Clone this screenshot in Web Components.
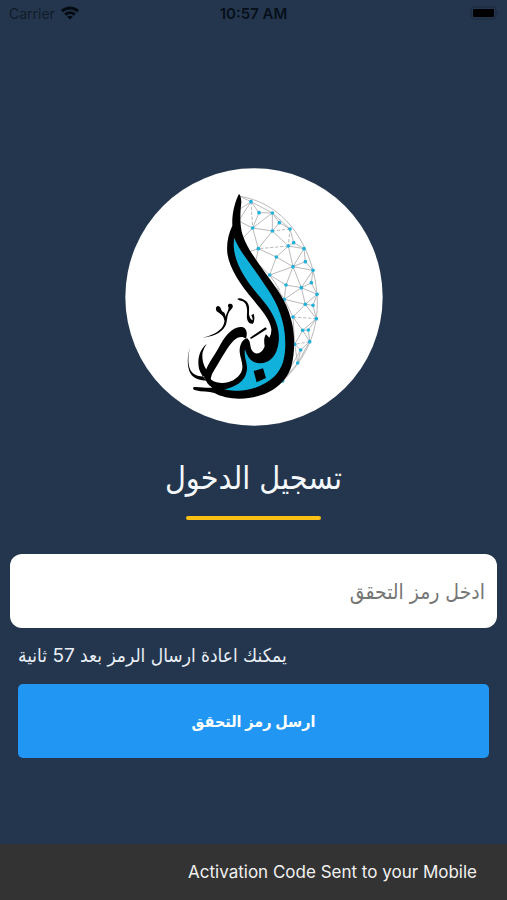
<!DOCTYPE html>
<html lang="ar">
<head>
  <meta charset="UTF-8">
  <meta name="viewport" content="width=device-width, initial-scale=1.0">
  <title>تسجيل الدخول</title>
  <style>
    body {
      margin: 0;
      background: #24364d;
      font-family: Inter, "DejaVu Sans Condensed", "DejaVu Sans", sans-serif;
    }
  </style>
</head>
<body>
  <login-page></login-page>

  <script>
    class StatusBar extends HTMLElement {
      constructor() {
        super();
        this.shadowDOM = this.attachShadow({ mode: "open" });
      }

      connectedCallback() {
        this.shadowDOM.innerHTML = `
          <style>
          :host {
            display: grid;
            grid-template-columns: 1fr auto 1fr;
            align-items: center;
            height: 26px;
            padding: 0 9px;
            font-size: 14px;
            color: #07101a;
          }
          .carrier {
            display: flex;
            align-items: center;
            gap: 6px;
            color: #101c29;
          }
          .time {
            font-size: 15px;
            font-weight: 600;
          }
          .battery {
            justify-self: end;
          }
          svg {
            display: block;
          }
          </style>
          <span class="carrier"><span><slot name="carrier"></slot></span>
            <svg width="18" height="14" viewBox="0 0 18 14" fill="none" stroke="#050b12" stroke-width="3">
              <path d="M1 5.2C5.5 .8 12.5 .8 17 5.2"/>
              <path d="M4.2 8.6C7 6 11 6 13.8 8.6"/>
              <path d="M9 13.5 6.2 10.7C7.8 9.3 10.2 9.3 11.8 10.7Z" fill="#050b12" stroke="none"/>
            </svg>
          </span>
          <span class="time"><slot name="time"></slot></span>
          <svg class="battery" width="28" height="14" viewBox="0 0 28 14">
            <rect x="1" y="1" width="25" height="12" rx="3" fill="none" stroke="#1b2a3d"/>
            <rect x="3" y="3" width="21" height="8" rx="1" fill="#000"/>
            <path d="M27 5c1 1 1 3 0 4z" fill="#1b2a3d"/>
          </svg>
        `;
      }
    }

    class BrandLogo extends HTMLElement {
      constructor() {
        super();
        this.shadowDOM = this.attachShadow({ mode: "open" });
      }

      connectedCallback() {
        // nodes of the net behind the letters, and the pairs that are joined
        const nodes = [
          [213, 64], [237, 97], [277, 98], [298, 127], [330, 146], [218, 143], [277, 152],
          [341, 187], [325, 197], [372, 205], [235, 205], [289, 230], [376, 244], [339, 259],
          [399, 270], [269, 284], [394, 307], [318, 314], [364, 322], [411, 342], [313, 357],
          [376, 372], [399, 375], [409, 415], [339, 410], [368, 450], [385, 449], [389, 484],
          [344, 492], [362, 509], [353, 548], [308, 602],
        ];
        const links = [
          [0, 1], [0, 2], [1, 2], [1, 5], [2, 3], [2, 4], [2, 5], [3, 4], [3, 6],
          [2, 6], [5, 6], [5, 10], [6, 10], [6, 8], [4, 7], [7, 8], [7, 9], [8, 9], [8, 11],
          [10, 11], [11, 13], [8, 13], [9, 13], [9, 12], [12, 13], [12, 14], [13, 14], [11, 15],
          [13, 15], [15, 17], [13, 17], [13, 18], [14, 18], [14, 16], [16, 18], [16, 19],
          [17, 18], [18, 19], [17, 20], [18, 20], [18, 21], [19, 21], [19, 22], [21, 22],
          [20, 21], [20, 24], [21, 24], [21, 23], [22, 23], [24, 25], [23, 25], [23, 26],
          [25, 26], [25, 27], [26, 27], [24, 28], [25, 28], [28, 29], [27, 29], [27, 30],
          [29, 30], [28, 30], [30, 31], [29, 31],
        ];
        const dashed = [[0, 5], [4, 6], [4, 8], [8, 10], [23, 24], [27, 28]];
        const line = ([a, b]) => `M${nodes[a]}L${nodes[b]}`;

        this.shadowDOM.innerHTML = `
          <style>
          :host {
            display: block;
            width: 258px;
            max-width: 80%;
          }
          svg {
            display: block;
            width: 100%;
          }
          </style>
          <svg viewBox="-165 -37 774 774" role="img" aria-label="البدر">
            <circle cx="222" cy="350" r="386" fill="#fff"/>
            <g fill="none" stroke="#bcbabc" stroke-width="3">
              <path d="M180 48 213 64 180 86M213 64 178 118M218 143 180 124M218 143 190 172M235 205 208 214M235 205 228 240M269 284 240 256M269 284 300 330M313 357 290 322"/>
              <path d="M180 48C292 66 368 154 399 270C433 403 400 514 308 602"/>
              <path d="${links.map(line).join("")}"/>
              <path d="${dashed.map(line).join("")}" stroke-dasharray="10 5"/>
            </g>
            <g fill="#20b2da">
              ${nodes.map(([x, y]) => `<circle cx="${x}" cy="${y}" r="5.5"/>`).join("")}
            </g>
            <path d="M177 41C166 61 155 99 157 136C145 160 139 189 142 219C148 264 181 313 221 360C250 395 270 420 274 446Q275 462 268 472L258 462C251 472 252 486 254 498C248 517 232 524 221 516C211 508 212 494 208 482L202 474C188 476 178 494 179 515C181 537 193 555 184 575C170 601 139 613 110 606C96 602 90 597 88 587L74 590C78 605 86 616 97 622C80 624 62 619 42 620C37 622 39 629 47 630C65 635 86 633 103 638C131 653 170 659 211 652C270 644 319 609 334 558C343 527 346 476 337 432C326 378 303 342 272 300C234 246 202 207 188 164C178 133 181 95 184 65Q183 45 177 41Z"/>
            <path d="M162 172C185 224 224 265 253 312C286 357 308 405 314 458C320 516 312 560 284 588C255 615 214 631 174 631Q149 632 132 627C166 622 196 602 200 573C205 550 190 530 195 507C201 529 214 548 237 549C268 550 292 526 296 484C302 437 275 390 242 352C199 303 164 252 161 196Z" fill="#10b2dc"/>
            <path d="M221 572 249 564 258 593 230 606Z"/>
            <path d="M72 592C76 558 99 533 116 502C134 468 157 438 184 440C199 441 204 457 198 475C188 467 174 468 162 480C142 499 124 536 106 564Q94 580 90 602Z"/>
            <path d="M210 472 256 441 261 446 213 476ZM30 502C22 533 23 565 39 579C50 589 65 589 80 588L84 601C60 601 41 596 31 579C19 555 23 522 30 502ZM80 491C56 509 52 542 57 565Q64 588 83 602L92 580C72 568 64 537 68 516Q72 502 80 491Z"/>
            <path d="M67 472C92 467 119 455 129 437Q138 421 128 407C121 398 112 397 108 389C106 378 114 374 119 379C125 385 122 390 130 395Q137 399 136 410C141 396 145 391 146 382C139 370 153 367 158 375C161 384 149 389 146 398C140 410 143 422 136 437C123 461 94 469 67 472Z"/>
            <path d="M172 357C176 350 190 355 199 363C210 374 207 388 207 401Q209 417 218 420Q218 412 214 405L221 400Q226 417 219 430C204 432 199 417 201 401C203 382 198 367 188 363Q179 361 172 357Z"/>
          </svg>
        `;
      }
    }

    class PageTitle extends HTMLElement {
      constructor() {
        super();
        this.shadowDOM = this.attachShadow({ mode: "open" });
      }

      connectedCallback() {
        this.shadowDOM.innerHTML = `
          <style>
          :host {
            display: flex;
            flex-direction: column;
            align-items: center;
            gap: 14px;
          }
          h1 {
            margin: 0;
            font-size: 32px;
            line-height: 48px;
            font-weight: normal;
            color: #f4f8fb;
          }
          .rule {
            width: 135px;
            height: 4px;
            border-radius: 2px;
            background: #fac015;
          }
          </style>
          <h1 dir="rtl"><slot></slot></h1>
          <div class="rule"></div>
        `;
      }
    }

    class CodeForm extends HTMLElement {
      constructor() {
        super();
        this.shadowDOM = this.attachShadow({ mode: "open" });
      }

      connectedCallback() {
        const label = this.getAttribute("label");
        this.shadowDOM.innerHTML = `
          <style>
          * {
            box-sizing: border-box;
          }
          :host {
            display: block;
          }
          form {
            display: flex;
            flex-direction: column;
            padding: 0 10px;
          }
          input {
            width: 100%;
            height: 74px;
            padding: 0 12px;
            border: 0;
            border-radius: 12px;
            background: #fff;
            font-family: inherit;
            font-size: 21px;
            color: #222;
          }
          input::placeholder {
            color: #757575;
            opacity: 1;
          }
          p {
            margin: 12px 8px;
            font-size: 19px;
            line-height: 32px;
            text-align: left;
            color: #e8eef5;
          }
          button {
            height: 74px;
            margin: 0 8px;
            border: 0;
            border-radius: 5px;
            background: #2196f3;
            font-family: inherit;
            font-size: 16px;
            font-weight: bold;
            color: #fff;
          }
          </style>
          <form>
            <input type="text" dir="rtl" inputmode="numeric" aria-label="${label}" placeholder="${label}">
            <p dir="rtl"><slot name="hint"></slot></p>
            <button type="button" dir="rtl"><slot name="action"></slot></button>
          </form>
        `;
      }
    }

    class SnackBar extends HTMLElement {
      constructor() {
        super();
        this.shadowDOM = this.attachShadow({ mode: "open" });
      }

      connectedCallback() {
        this.shadowDOM.innerHTML = `
          <style>
          :host {
            display: block;
            padding: 16px 30px;
            font-size: 17px;
            line-height: 24px;
            text-align: right;
            color: #f1f1f1;
            background: #333;
          }
          </style>
          <div role="status"><slot></slot></div>
        `;
      }
    }

    class LoginPage extends HTMLElement {
      constructor() {
        super();
        this.shadowDOM = this.attachShadow({ mode: "open" });
      }

      connectedCallback() {
        this.shadowDOM.innerHTML = `
          <style>
          :host {
            display: flex;
            flex-direction: column;
            min-height: 100vh;
          }
          main {
            flex: 1;
            display: flex;
            flex-direction: column;
            padding: 142px 0 32px;
          }
          brand-logo {
            align-self: center;
          }
          page-title {
            margin: 28px 0 34px;
          }
          </style>
          <status-bar>
            <span slot="carrier">Carrier</span>
            <span slot="time">10:57 AM</span>
          </status-bar>
          <main>
            <brand-logo></brand-logo>
            <page-title>تسجيل الدخول</page-title>
            <code-form label="ادخل رمز التحقق">
              <span slot="hint">يمكنك اعادة ارسال الرمز بعد 57 ثانية</span>
              <span slot="action">ارسل رمز التحقق</span>
            </code-form>
          </main>
          <snack-bar>Activation Code Sent to your Mobile</snack-bar>
        `;
      }
    }

    customElements.define("status-bar", StatusBar);
    customElements.define("brand-logo", BrandLogo);
    customElements.define("page-title", PageTitle);
    customElements.define("code-form", CodeForm);
    customElements.define("snack-bar", SnackBar);
    customElements.define("login-page", LoginPage);
  </script>
</body>
</html>
